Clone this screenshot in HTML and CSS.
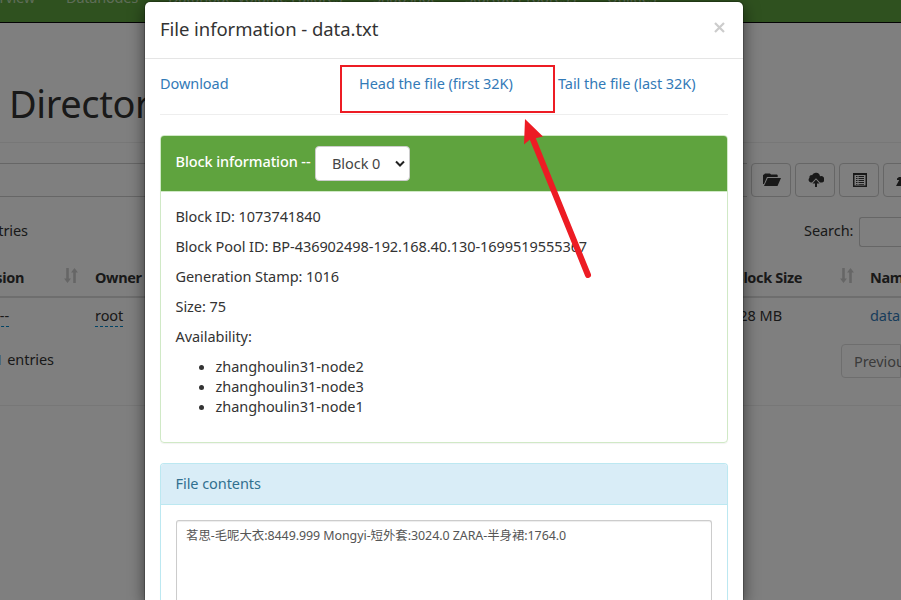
FILE: index.html
```html
<!DOCTYPE html>
<html lang="en">
<head>
<meta charset="utf-8">
<title>Browsing HDFS</title>
<link rel="stylesheet" href="styles.css">
</head>
<body>
<div class="page">
  <nav class="navbar">
    <span class="nav-first"><span>Overview</span></span>
    <span class="nav-a">Datanodes</span>
    <span class="nav-b">Datanode Volume Failures</span>
    <span class="nav-c">Snapshot</span>
    <span class="nav-d">Startup Progress</span>
    <span class="nav-e">Utilities</span>
  </nav>
  <h1>Directory</h1>
  <div class="toolbar">
    <div class="path-input"></div>
    <div class="tool">
      <svg width="18" height="16" viewBox="0 0 18 16"><path d="M0 12V3l1-.5L2 1.500h5l1 1h6l.7.7V5H4L1 12z"/><path d="M4.700 6H18l-3.500 8H1z"/></svg>
    </div>
    <div class="tool">
      <svg width="16" height="16" viewBox="0 0 16 16"><path d="M3.500 10.500H2.800A2.700 2.700 0 0 1 1.500 5.800 2 2 0 0 1 4 3.200 4.200 4.200 0 0 1 12 4.200a3 3 0 0 1 2.200 6.300H12L8 6.200 4 10.500z"/><path d="M8 7.500l3.500 4H9V15H7v-3.500H4.500z"/></svg>
    </div>
    <div class="tool">
      <svg width="14" height="16" viewBox="0 0 14 16"><path fill-rule="evenodd" d="M0 1h14v14H0zM1.500 3v10.500h11V3zM3 4h1.500v1H3zM5.500 4H11v1H5.500zM3 6h1.500v1H3zM5.500 6H11v1H5.500zM3 8h1.500v1H3zM5.500 8H11v1H5.500zM3 10h1.500v1H3zM5.500 10H11v1H5.500zM3 12h1.500v.8H3zM5.500 12H11v.8H5.500z"/></svg>
    </div>
    <div class="tool">
      <svg width="16" height="16" viewBox="0 0 16 16"><path d="M1 8V6.500L3 5h9v3H6l-1 2.500h9V14H0l3.200-6z"/></svg>
    </div>
  </div>
  <div class="filter">
    <span class="clip-start entries-label"><span>entries</span></span>
    <span class="search">Search:<span class="search-input"></span></span>
  </div>
  <div class="table head">
    <span class="clip-start"><span>Permission</span></span>
    <svg class="sort" width="14" height="15" viewBox="0 0 14 15"><path d="M2.200 0h2.600v10.500H7L3.500 15 0 10.500h2.200zM9.200 15h2.600V4.500H14L10.500 0 7 4.500h2.200z"/></svg>
    <span>Owner</span>
    <span class="right">Block Size</span>
    <svg class="sort" width="14" height="15" viewBox="0 0 14 15"><path d="M2.200 0h2.600v10.500H7L3.500 15 0 10.500h2.200zM9.200 15h2.600V4.500H14L10.500 0 7 4.500h2.200z"/></svg>
    <span>Name</span>
  </div>
  <div class="table row">
    <span class="clip-start perm"><span class="editable">-rw-r--r--</span></span>
    <span></span>
    <span><span class="editable">root</span></span>
    <span class="right size">128 MB</span>
    <span></span>
    <span class="link">data.txt</span>
  </div>
  <div class="pager">
    <span class="clip-start count"><span>1</span><span>entries</span></span>
    <span class="previous">Previous</span>
  </div>
</div>
<div class="backdrop"></div>
<section class="modal">
  <header class="modal-header">
    <h4>File information - data.txt</h4>
    <svg class="close" width="11" height="11" viewBox="0 0 11 11"><path d="M1 1l9 9M10 1l-9 9"/></svg>
  </header>
  <div class="modal-body">
    <div class="links">
      <a>Download</a>
      <a>Head the file (first 32K)</a>
      <a>Tail the file (last 32K)</a>
    </div>
    <div class="panel success">
      <div class="panel-heading">
        <span class="block-label">Block information --</span>
        <span class="select">Block 0<svg width="10" height="8" viewBox="0 0 10 8"><path d="M1 1.500l4 4 4-4"/></svg></span>
      </div>
      <div class="panel-body">
        <p>Block ID: 1073741840</p>
        <p>Block Pool ID: BP-436902498-192.168.40.130-1699519555367</p>
        <p>Generation Stamp: 1016</p>
        <p>Size: 75</p>
        <p>Availability:</p>
        <ul>
          <li>zhanghoulin31-node2</li>
          <li>zhanghoulin31-node3</li>
          <li>zhanghoulin31-node1</li>
        </ul>
      </div>
    </div>
    <div class="panel info">
      <div class="panel-heading">File contents</div>
      <div class="panel-body">
        <div class="contents">茗思-毛呢大衣:8449.999 Mongyi-短外套:3024.0 ZARA-半身裙:1764.0</div>
      </div>
    </div>
  </div>
</section>
<svg class="annotation" width="901" height="600" viewBox="0 0 901 600">
  <rect x="341" y="66" width="213" height="46"/>
  <path class="shaft" d="M532 137L588 275"/>
  <path class="tip" d="M525 119L543 136.500 534.500 138.500 530 139.500 524 144.500z"/>
</svg>
</body>
</html>
```
FILE: styles.css
```css
* { box-sizing: border-box; }
html, body { margin: 0; height: 600px; overflow: hidden; }
body {
  position: relative;
  background: #fff;
  color: #333;
  font: 14.5px/20px "Noto Sans", "Noto Sans CJK SC", sans-serif;
  letter-spacing: -.06px;
}
.page { width: 901px; height: 600px; overflow: hidden; white-space: nowrap; }
.navbar {
  display: flex;
  height: 23px;
  padding-bottom: 15px;
  align-items: flex-end;
  background: #5fa33e;
  border-bottom: 1px solid #080808;
  color: #bdd9b0;
  letter-spacing: -.2px;
}
.navbar > span { flex: none; }
.nav-first { width: 66px; padding-right: 31px; display: flex; justify-content: flex-end; }
.nav-a { width: 102px; }
.nav-b { width: 205px; }
.nav-c { width: 92px; }
.nav-d { width: 142px; }
h1 {
  height: 120px;
  margin: 0 0 20px;
  padding: 58px 0 0 9px;
  border-bottom: 1px solid #eee;
  font-size: 38px;
  line-height: 44px;
  font-weight: 400;
  letter-spacing: -.4px;
}
.toolbar { display: flex; gap: 4px; height: 34px; }
.path-input { flex: none; width: 747px; border: 1px solid #ccc; border-width: 1px 0; }
.tool {
  flex: none;
  width: 40px;
  display: flex;
  align-items: center;
  justify-content: center;
  padding-left: 2px;
  border: 1px solid #ccc;
  border-radius: 4px;
  fill: #333;
}
.filter { display: flex; justify-content: space-between; height: 30px; margin-top: 20px; line-height: 26px; }
.clip-start { display: flex; justify-content: flex-end; }
.entries-label { width: 28px; }
.search { display: flex; width: 97px; flex: none; justify-content: space-between; }
.search-input { flex: none; width: 42px; border: 1px solid #ccc; border-right: 0; border-radius: 3px 0 0 3px; }
.table {
  display: grid;
  grid-template-columns: 24px 71px 500px 207px 68px 80px;
}
.head {
  height: 51px;
  padding-top: 20px;
  border-bottom: 2px solid #ddd;
  font-weight: 700;
  letter-spacing: -.35px;
}
.sort { margin: 1px 0 0 40px; fill: #ccc; }
.head .sort:nth-of-type(2) { margin-left: 38px; }
.right { text-align: right; }
.row { height: 46px; padding-top: 7px; }
.perm { width: 9px; }
.size { padding-right: 20px; }
.editable { display: inline-block; height: 22px; border-bottom: 1px dashed #08c; }
.link { color: #337ab7; }
.pager {
  display: flex;
  justify-content: space-between;
  height: 62px;
  border-bottom: 1px solid #eee;
}
.count { width: 54px; padding-top: 5px; gap: 4px; }
.previous {
  flex: none;
  width: 60px;
  height: 34px;
  padding: 6px 12px;
  border: 1px solid #ddd;
  border-radius: 4px 0 0 4px;
  color: #777;
}
.backdrop { position: absolute; inset: 0; background: rgba(0, 0, 0, .5); }
.modal {
  position: absolute;
  left: 144px;
  top: 1px;
  width: 600px;
  height: 599px;
  overflow: hidden;
  border: 1px solid rgba(0, 0, 0, .2);
  border-bottom: 0;
  border-radius: 6px 6px 0 0;
  background: #fff;
  background-clip: padding-box;
  box-shadow: 0 5px 15px rgba(0, 0, 0, .5);
}
.modal-header {
  display: flex;
  justify-content: space-between;
  height: 57px;
  padding: 14px 15px;
  border-bottom: 1px solid #e5e5e5;
}
h4 { margin: 0; font-size: 18.500px; font-weight: 400; line-height: 26px; }
.close { margin: 6px 3px; fill: none; stroke: #ccc; stroke-width: 2.2; }
.modal-body { padding: 14px 15px; }
.links {
  display: grid;
  grid-template-columns: 199px 199px 1fr;
  height: 42px;
  margin-bottom: 20px;
  border-bottom: 1px solid #eee;
  color: #337ab7;
}
.panel { width: 568px; border: 1px solid; border-radius: 4px; margin-bottom: 20px; box-shadow: 0 1px 1px rgba(0, 0, 0, .05); }
.panel-heading { padding: 9px 14.500px; border-bottom: 1px solid; border-radius: 3px 3px 0 0; border-color: inherit; }
.success { height: 308px; border-color: #d0e9c6; }
.success .panel-heading { display: flex; gap: 4px; height: 56px; padding: 10px 14.500px; background: #5fa33e; color: #fff; }
.block-label { width: 135.500px; line-height: 30px; font-weight: 500; letter-spacing: -.1px; white-space: nowrap; }
.select {
  display: flex;
  align-items: center;
  justify-content: space-between;
  width: 95px;
  height: 35px;
  padding: 0 4px 2px 16px;
  border: 1px solid #ccc;
  border-radius: 4px;
  background: #fff;
  color: #444;
}
.select svg { margin-top: 2px; fill: none; stroke: #222; stroke-width: 2; }
.panel-body { padding: 14px 14.500px; }
.panel-body p { margin: 0 0 10px; }
.panel-body ul { margin: 0; padding-left: 40px; }
.info { height: 137px; border-bottom: 0; border-radius: 4px 4px 0 0; margin-bottom: 0; border-color: #bce8f1; }
.info .panel-heading { height: 41px; background: #d9edf7; color: #31708f; }
.info .panel-body { padding: 15px 15px 0; }
.contents {
  height: 80px;
  padding: 6px 9px;
  border: 1px solid #ccc;
  border-bottom: 0;
  border-radius: 3px 3px 0 0;
  box-shadow: inset 0 1px 1px rgba(0, 0, 0, .075);
  color: #555;
  font-size: 12.450px;
  line-height: 18px;
}
.annotation { position: absolute; left: 0; top: 0; fill: none; }
.annotation rect { stroke: #ed1c24; stroke-width: 2; }
.shaft { stroke: #ed1c24; stroke-width: 6; stroke-linecap: round; }
.tip { fill: #ed1c24; }
```
